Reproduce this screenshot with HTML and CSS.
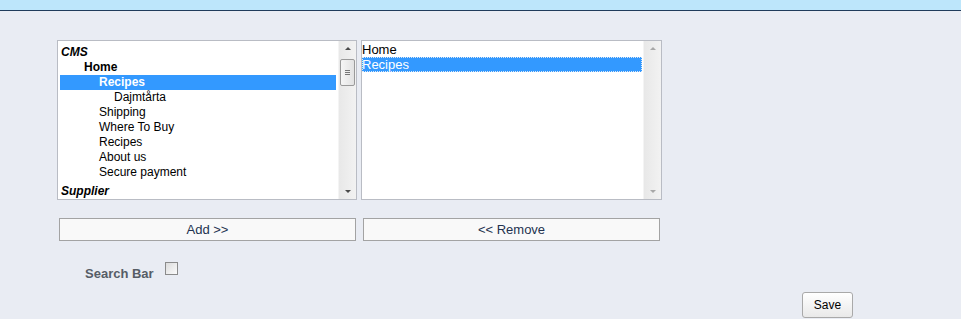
FILE: index.html
```html
<!DOCTYPE html>
<html lang="sv">
<head>
  <meta charset="UTF-8">
  <title>Meny</title>
  <link rel="stylesheet" href="styles.css">
</head>
<body>

  <!-- Topplist -->
  <div class="topbar"></div>

  <div class="content">

    <!-- Listboxar -->
    <div class="lists">
      <div class="listbox">
        <ul class="items">
          <li class="grupp">CMS</li>
          <li class="niva1">Home</li>
          <li class="niva2 vald">Recipes</li>
          <li class="niva3">Dajmtårta</li>
          <li class="niva2">Shipping</li>
          <li class="niva2">Where To Buy</li>
          <li class="niva2">Recipes</li>
          <li class="niva2">About us</li>
          <li class="niva2">Secure payment</li>
          <li class="grupp ny-grupp">Supplier</li>
        </ul>
        <div class="scrollbar">
          <span class="pil upp"></span>
          <div class="thumb"><span></span><span></span><span></span></div>
          <span class="pil ned"></span>
        </div>
      </div>

      <div class="listbox hoger">
        <ul class="items">
          <li>Home</li>
          <li class="vald fokus">Recipes</li>
        </ul>
        <div class="scrollbar avstangd">
          <span class="pil upp"></span>
          <span class="pil ned"></span>
        </div>
      </div>
    </div>

    <!-- Knappar -->
    <div class="knappar">
      <button class="knapp">Add &gt;&gt;</button>
      <button class="knapp">&lt;&lt; Remove</button>
    </div>

    <!-- Sökfält -->
    <div class="sokrad">
      <span class="etikett">Search Bar</span>
      <span class="kryssruta"></span>
    </div>

    <div class="spara-rad">
      <button class="spara">Save</button>
    </div>

  </div>

</body>
</html>
```

FILE: styles.css
```css
body {
  margin: 0;
  padding: 0;
  background-color: #e9ecf3;
  font-family: "Liberation Sans", Arial, sans-serif;
  font-size: 12px;
  overflow: hidden;
}

.topbar {
  height: 10px;
  background-color: #bde6fb;
  border-bottom: 1px solid #1f3b5b;
}

.content {
  padding: 29px 0 0 57px;
}

/* Listboxar */
.lists {
  display: flex;
  gap: 4px;
}

.listbox {
  display: flex;
  width: 298px;
  height: 158px;
  background: #fff;
  border: 1px solid #b9bcc4;
}

.listbox.hoger {
  width: 299px;
}

.items {
  flex: 1;
  margin: 0;
  padding: 4px 2px 0 2px;
  list-style: none;
  color: #000;
}

.items li {
  height: 15px;
  line-height: 15px;
  white-space: nowrap;
}

.grupp {
  font-weight: bold;
  font-style: italic;
  padding-left: 1px;
}

.ny-grupp {
  margin-top: 4px;
}

.niva1 {
  font-weight: bold;
  padding-left: 24px;
}

.niva2 {
  padding-left: 39px;
}

.niva3 {
  padding-left: 54px;
}

.items li.vald {
  background: #3399ff;
  color: #fff;
}

.listbox .niva2.vald {
  font-weight: bold;
}

.hoger .items {
  padding: 1px 1px 0 0;
  font-size: 13px;
}

.hoger .items li.fokus {
  outline: 1px dotted #dfe9f5;
  outline-offset: -1px;
}

/* Rullningslist */
.scrollbar {
  width: 17px;
  display: flex;
  flex-direction: column;
  align-items: center;
  background: linear-gradient(to right, #e8e8e8, #f2f2f2);
  border-left: 1px solid #f4f4f4;
}

.pil {
  width: 0;
  height: 0;
  border-left: 3px solid transparent;
  border-right: 3px solid transparent;
  margin: 6px 0;
}

.pil.upp {
  border-bottom: 3px solid #4a4a4a;
}

.pil.ned {
  margin-top: auto;
  border-top: 3px solid #4a4a4a;
}

.avstangd .pil.upp {
  border-bottom-color: #a8a8a8;
}

.avstangd .pil.ned {
  border-top-color: #a8a8a8;
}

.thumb {
  width: 13px;
  height: 25px;
  margin-top: 3px;
  border: 1px solid #9a9a9a;
  border-radius: 2px;
  background: linear-gradient(to right, #f6f6f6, #e2e2e2);
  display: flex;
  flex-direction: column;
  align-items: center;
  justify-content: center;
  gap: 1px;
}

.thumb span {
  width: 5px;
  height: 1px;
  background: #777;
}

/* Knappar */
.knappar {
  display: flex;
  gap: 7px;
  padding: 18px 0 0 2px;
}

.knapp {
  width: 297px;
  height: 23px;
  padding: 0;
  background: #f9f9f9;
  border: 1px solid #a3a3a3;
  color: #23324f;
  font-family: "Liberation Sans", Arial, sans-serif;
  font-size: 13px;
}

/* Sökfält */
.sokrad {
  display: flex;
  align-items: flex-start;
  padding: 21px 0 0 28px;
}

.etikett {
  margin-top: 4px;
  font-size: 13px;
  font-weight: bold;
  color: #565d66;
}

.kryssruta {
  width: 11px;
  height: 11px;
  margin-left: 11px;
  border: 1px solid #8b8b8b;
  background: linear-gradient(135deg, #dcdcdc, #fbfbfb);
}

.spara-rad {
  padding: 11px 0 0 745px;
}

.spara {
  width: 51px;
  height: 26px;
  padding: 0;
  border: 1px solid #a9a9a9;
  border-radius: 3px;
  background: linear-gradient(#ffffff, #e9e9e9);
  color: #000;
  font-family: "Liberation Sans", Arial, sans-serif;
  font-size: 12px;
}
```
